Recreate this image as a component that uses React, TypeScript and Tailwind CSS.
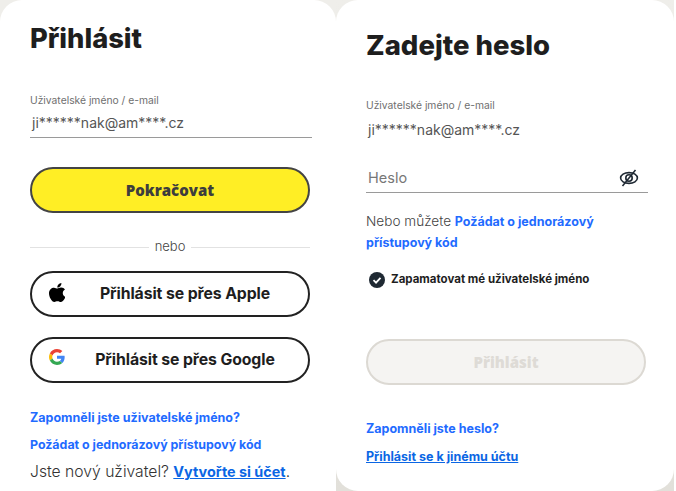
const inter = "font-['Inter','Liberation_Sans',sans-serif]"

function AppleIcon() {
  return (
    <svg className="w-4 h-[19px]" viewBox="4 30 365 451" preserveAspectRatio="none" fill="#000">
      <path d="M318.7 268.7c-.2-36.7 16.4-64.4 50-84.8-18.8-26.9-47.2-41.7-84.7-44.6-35.5-2.8-74.3 20.7-88.5 20.7-15 0-49.4-19.7-76.4-19.7C63.3 141.2 4 184.8 4 273.5q0 39.3 14.4 81.2c12.8 36.7 59 126.7 107.2 125.2 25.2-.6 43-17.9 75.8-17.9 31.8 0 48.3 17.9 76.4 17.9 48.6-.7 90.4-82.5 102.6-119.3-65.2-30.7-61.7-90-61.7-91.9zm-56.6-164.2c27.3-32.4 24.8-61.9 24-72.5-24.1 1.4-52 16.4-67.9 34.9-17.5 19.8-27.8 44.3-25.6 71.9 26.1 2 49.9-11.4 69.5-34.3z" />
    </svg>
  )
}

function GoogleIcon() {
  return (
    <svg className="w-4 h-4" viewBox="0 0 48 48">
      <path fill="#EA4335" d="M24 9.5c3.54 0 6.71 1.22 9.21 3.6l6.85-6.85C35.9 2.38 30.47 0 24 0 14.62 0 6.51 5.38 2.56 13.22l7.98 6.19C12.43 13.72 17.74 9.5 24 9.5z" />
      <path fill="#4285F4" d="M46.98 24.55c0-1.57-.15-3.09-.38-4.55H24v9.02h12.94c-.58 2.96-2.26 5.48-4.78 7.18l7.73 6c4.51-4.18 7.09-10.36 7.09-17.65z" />
      <path fill="#FBBC05" d="M10.53 28.59c-.48-1.45-.76-2.99-.76-4.59s.27-3.14.76-4.59l-7.98-6.19C.92 16.46 0 20.12 0 24c0 3.88.92 7.54 2.56 10.78l7.97-6.19z" />
      <path fill="#34A853" d="M24 48c6.48 0 11.93-2.13 15.89-5.81l-7.73-6c-2.15 1.45-4.92 2.3-8.16 2.3-6.26 0-11.57-4.22-13.47-9.91l-7.98 6.19C6.51 42.62 14.62 48 24 48z" />
    </svg>
  )
}

function EyeOffIcon() {
  return (
    <svg className="w-5 h-5" viewBox="0 0 20 20" fill="none" stroke="#1f2933" strokeWidth="1.6">
      <ellipse cx="10" cy="10" rx="8.4" ry="5.4" />
      <circle cx="10" cy="10" r="3.2" />
      <path d="M3.5 18 16.5 2" />
    </svg>
  )
}

function SocialButton({ icon, label }: { icon: React.ReactNode; label: string }) {
  return (
    <button className="relative w-[280px] h-[46px] rounded-[23px] border-2 border-[#222] bg-white flex items-center justify-center text-[15.8px] font-bold text-[#1e1e1e] tracking-[-0.1px]">
      <span className="absolute left-[17px] top-[10px]">{icon}</span>
      <span className="pl-[30px]">{label}</span>
    </button>
  )
}

export default function App() {
  return (
    <div className={`${inter} w-[676px] h-[491px] overflow-hidden bg-white flex`}>
      <div className="w-[336px] h-[491px] bg-[#efeeea] shrink-0">
        <div className="w-[336px] h-[491px] bg-white rounded-tl-[22px] rounded-tr-[22px] pl-[30px] pt-[21px]">
          <h1 className="text-[27.3px] leading-[36px] font-extrabold text-[#1e1e1e]">Přihlásit</h1>
          <p className="mt-[36px] text-[10.3px] leading-[14px] text-[#6f6f6f]">Uživatelské jméno / e-mail</p>
          <div className="mt-[4px] w-[282px] h-[27px] border-b border-[#9a9a9a] pl-[2px] text-[14px] leading-[24px] text-[#555]">
            ji******nak@am****.cz
          </div>
          <button className="mt-[29px] w-[280px] h-[46px] rounded-[23px] border-2 border-[#444] bg-[#ffee25] text-[15px] font-extrabold text-[#3d3d3d] font-['Open_Sans',sans-serif]">
            Pokračovat
          </button>
          <div className="mt-[26px] w-[280px] h-[16px] flex items-center gap-[6px] text-[13px] font-light text-[#444]">
            <div className="flex-1 h-px bg-[#e2e2e2]" />
            <span>nebo</span>
            <div className="flex-1 h-px bg-[#e2e2e2]" />
          </div>
          <div className="mt-[16px] flex flex-col gap-[20px]">
            <SocialButton icon={<AppleIcon />} label="Přihlásit se přes Apple" />
            <SocialButton icon={<GoogleIcon />} label="Přihlásit se přes Google" />
          </div>
          <a className="block mt-[27px] text-[12.5px] leading-[16px] font-bold text-[#1f6bff]">Zapomněli jste uživatelské jméno?</a>
          <a className="block mt-[11px] text-[12.4px] leading-[16px] font-bold text-[#1f6bff]">Požádat o jednorázový přístupový kód</a>
          <p className="mt-[9px] text-[15.7px] leading-[20px] font-light text-[#333]">
            Jste nový uživatel? <a className="text-[14.4px] font-bold text-[#0b66e4] underline">Vytvořte si účet</a>.
          </p>
        </div>
      </div>
      <div className="w-[338px] h-[491px] bg-linear-to-b from-[#efeeea] to-[#e2e0da] shrink-0">
        <div className="w-[338px] h-[491px] bg-white rounded-[22px] pl-[30px] pt-[27px]">
          <h1 className="text-[27.5px] leading-[36px] font-extrabold text-[#1e1e1e]">Zadejte heslo</h1>
          <p className="mt-[35px] text-[10.3px] leading-[14px] text-[#6f6f6f]">Uživatelské jméno / e-mail</p>
          <div className="mt-[8px] pl-[2px] text-[14px] leading-[20px] text-[#555]">ji******nak@am****.cz</div>
          <div className="mt-[24px] w-[282px] h-[29px] border-b border-[#9a9a9a] pl-[2px] pr-[9px] flex items-center justify-between text-[14.5px] text-[#777]">
            <span>Heslo</span>
            <EyeOffIcon />
          </div>
          <p className="mt-[18px] w-[270px] text-[13.6px] leading-[20px] font-light text-[#444]">
            Nebo můžete <a className="text-[12.5px] font-bold text-[#1f6bff]">Požádat o jednorázový</a>
            <br />
            <a className="text-[12.5px] font-bold text-[#1f6bff]">přístupový kód</a>
          </p>
          <div className="mt-[18px] ml-[3px] flex items-center gap-[6px] text-[11.5px] font-bold text-[#1e1e1e]">
            <svg className="w-4 h-4" viewBox="0 0 16 16">
              <circle cx="8" cy="8" r="8" fill="#1f2933" />
              <path d="M4.5 8.2 7 10.6 11.5 5.8" fill="none" stroke="#fff" strokeWidth="1.8" />
            </svg>
            <span>Zapamatovat mé uživatelské jméno</span>
          </div>
          <button className="mt-[51px] w-[280px] h-[46px] rounded-[23px] border-2 border-[#dcd9d3] bg-[#f5f4f2] text-[15px] font-extrabold text-[#dedbd6] font-['Open_Sans',sans-serif]">
            Přihlásit
          </button>
          <a className="block mt-[36px] text-[12.5px] leading-[16px] font-bold text-[#1f6bff]">Zapomněli jste heslo?</a>
          <a className="block mt-[12px] text-[12.5px] leading-[16px] font-bold text-[#0b66e4] underline">Přihlásit se k jinému účtu</a>
        </div>
      </div>
    </div>
  )
}
